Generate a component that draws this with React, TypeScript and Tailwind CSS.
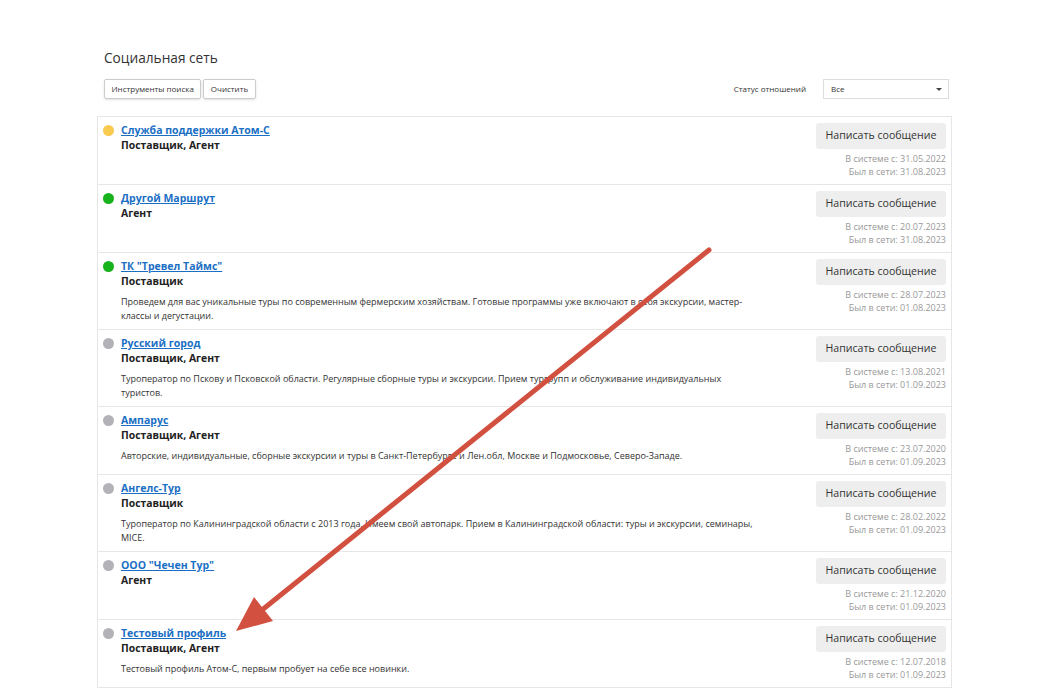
type Contact = {
  name: string
  role: string
  status: 'away' | 'online' | 'offline'
  about?: string
  since: string
  seen: string
}

const contacts: Contact[] = [
  { name: 'Служба поддержки Атом-С', role: 'Поставщик, Агент', status: 'away', since: '31.05.2022', seen: '31.08.2023' },
  { name: 'Другой Маршрут', role: 'Агент', status: 'online', since: '20.07.2023', seen: '31.08.2023' },
  {
    name: 'ТК "Тревел Таймс"',
    role: 'Поставщик',
    status: 'online',
    about:
      'Проведем для вас уникальные туры по современным фермерским хозяйствам. Готовые программы уже включают в себя экскурсии, мастер-классы и дегустации.',
    since: '28.07.2023',
    seen: '01.08.2023',
  },
  {
    name: 'Русский город',
    role: 'Поставщик, Агент',
    status: 'offline',
    about:
      'Туроператор по Пскову и Псковской области. Регулярные сборные туры и экскурсии. Прием тургрупп и обслуживание индивидуальных туристов.',
    since: '13.08.2021',
    seen: '01.09.2023',
  },
  {
    name: 'Ампарус',
    role: 'Поставщик, Агент',
    status: 'offline',
    about:
      'Авторские, индивидуальные, сборные экскурсии и туры в Санкт-Петербурге и Лен.обл, Москве и Подмосковье, Северо-Западе.',
    since: '23.07.2020',
    seen: '01.09.2023',
  },
  {
    name: 'Ангелс-Тур',
    role: 'Поставщик',
    status: 'offline',
    about:
      'Туроператор по Калининградской области с 2013 года. Имеем свой автопарк. Прием в Калининградской области: туры и экскурсии, семинары, MICE.',
    since: '28.02.2022',
    seen: '01.09.2023',
  },
  { name: 'ООО "Чечен Тур"', role: 'Агент', status: 'offline', since: '21.12.2020', seen: '01.09.2023' },
  {
    name: 'Тестовый профиль',
    role: 'Поставщик, Агент',
    status: 'offline',
    about: 'Тестовый профиль Атом-С, первым пробует на себе все новинки.',
    since: '12.07.2018',
    seen: '01.09.2023',
  },
]

const dotColor = {
  away: 'bg-[#f8ca4f]',
  online: 'bg-[#18b21c]',
  offline: 'bg-[#b3b2b8]',
}

function ContactRow({ c }: { c: Contact }) {
  return (
    <div className="flex justify-between border-t border-[#e6e6e6] pl-[5px] pr-[5px] py-[6px]">
      <div className="flex gap-[7px]">
        <span className={`mt-[2px] h-[11px] w-[11px] flex-shrink-0 rounded-full ${dotColor[c.status]}`} />
        <div>
          <a href="#" className="block text-[10.5px] font-bold leading-[15px] text-[#1a6fc4] underline">
            {c.name}
          </a>
          <p className="text-[10.4px] font-bold leading-[15px] text-[#222]">{c.role}</p>
          {c.about && (
            <p className="mt-[6px] w-[640px] text-[9px] leading-[14px] text-[#333]">{c.about}</p>
          )}
        </div>
      </div>

      <div className="flex flex-col items-end">
        <button className="h-[26px] w-[130px] rounded-[3px] bg-[#eeeeee] text-[10.6px] text-[#333]">
          Написать сообщение
        </button>
        <p className="mt-[3px] text-[9px] leading-[13px] text-[#999]">В системе с: {c.since}</p>
        <p className="text-[9px] leading-[13px] text-[#999]">Был в сети: {c.seen}</p>
      </div>
    </div>
  )
}

function App() {
  return (
    <div
      className="relative h-screen overflow-hidden bg-white"
      style={{ fontFamily: '"Open Sans", "Noto Sans", sans-serif' }}
    >
      <div className="ml-[97px] w-[855px]">
        {/* Header */}
        <h1 className="px-[7px] pt-[48px] text-[13.7px] leading-[20px] text-[#333]">Социальная сеть</h1>

        <div className="mt-[11px] flex items-center justify-between pl-[7px] pr-[3px]">
          <div className="flex gap-[2px]">
            <button className="h-[20px] rounded-[2px] border border-[#ccc] px-[6.5px] text-[8px] text-[#333] shadow-sm">
              Инструменты поиска
            </button>
            <button className="h-[20px] rounded-[2px] border border-[#ccc] px-[6.5px] text-[8px] text-[#333] shadow-sm">
              Очистить
            </button>
          </div>

          <div className="flex items-center gap-[17px]">
            <span className="text-[8px] text-[#333]">Статус отношений</span>
            <div className="flex h-[20px] w-[126px] items-center justify-between border border-[#ddd] pl-[7px] pr-[6px] text-[8px] text-[#333]">
              <span>Все</span>
              <span className="h-0 w-0 border-x-[3px] border-t-[3px] border-x-transparent border-t-[#444]" />
            </div>
          </div>
        </div>

        {/* Contacts list */}
        <div className="mt-[17px] border-x border-b border-[#e6e6e6]">
          {contacts.map((c) => (
            <ContactRow key={c.name} c={c} />
          ))}
        </div>
      </div>

      {/* Annotation arrow */}
      <svg className="pointer-events-none absolute inset-0" width="1043" height="693">
        <line x1="709" y1="250" x2="262" y2="610" stroke="#d2503f" strokeWidth="5" strokeLinecap="round" />
        <polygon points="236,631 254,597 273,621" fill="#d2503f" />
      </svg>
    </div>
  )
}

export default App
